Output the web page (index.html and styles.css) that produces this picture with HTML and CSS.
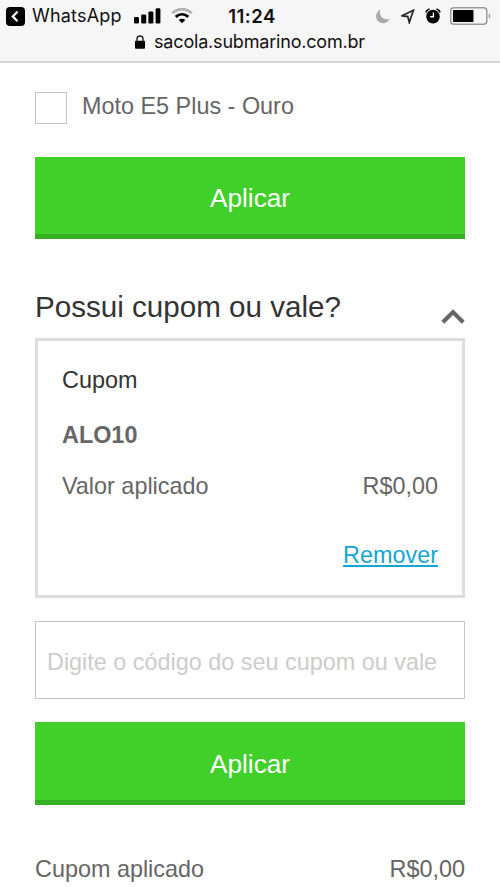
FILE: index.html
```html
<!DOCTYPE html>
<html lang="pt-BR">
<head>
<meta charset="utf-8">
<title>Sacola</title>
<link rel="stylesheet" href="styles.css">
</head>
<body>
<header class="browser">
  <div class="status">
    <div class="status-left">
      <svg class="back" width="19" height="19" viewBox="0 0 19 19"><rect width="19" height="19" rx="4"/><path d="M11.5 4.6 6.7 9.4l4.8 4.8" fill="none" stroke="#fff" stroke-width="2.2"/></svg>
      <span class="app">WhatsApp</span>
      <svg class="signal" width="27" height="16" viewBox="0 0 27 16"><rect x="0" y="9" width="5" height="6.5" rx="1.3"/><rect x="7.2" y="6.5" width="5" height="9" rx="1.3"/><rect x="14.4" y="3.5" width="5" height="12" rx="1.3"/><rect x="21.6" y="0.3" width="4.8" height="15.2" rx="1.3"/></svg>
      <svg class="wifi" width="22" height="16" viewBox="0 0 22 16"><path d="M1.2 5.2C7-.1 15-.1 20.8 5.2" fill="none" stroke="#b5b5b5" stroke-width="3"/><path d="M4.7 8.8C8.5 5.5 13.5 5.5 17.3 8.8" fill="none" stroke="#000" stroke-width="2.9"/><path d="M7.7 12C9.7 10.3 12.3 10.3 14.3 12L11 15.3Z"/></svg>
    </div>
    <span class="time">11:24</span>
    <div class="status-right">
      <svg width="14" height="15" viewBox="0 0 14 15"><path d="M4.4.4C-.5 2.8-1.2 8.7 2 12c3.500 3.700 9.700 2.600 11.700-2.300C7.800 12 2.200 7 4.400.4Z" fill="#aaa"/></svg>
      <svg class="arrow" width="15" height="15" viewBox="0 0 15 15"><path d="M13.400 1.300 1.500 6.900 7.700 7.300 9.300 13.400Z" fill="none" stroke="#222" stroke-width="1.700"/></svg>
      <svg class="alarm" width="16" height="16" viewBox="0 0 16 16"><circle cx="8" cy="8.600" r="6.800"/><path d="M.9 4.400Q1.800 1.800 4.500 1M15.100 4.400Q14.200 1.800 11.500 1" fill="none" stroke="#000" stroke-width="1.700"/><path d="M8.400 4.500V8.800H5.200" fill="none" stroke="#fff" stroke-width="1.400"/></svg>
      <svg class="battery" width="42" height="18" viewBox="0 0 42 18"><rect x=".8" y=".8" width="36" height="16.400" rx="3.200" fill="none" stroke="#999" stroke-width="1.500"/><rect x="3" y="3" width="20.500" height="12" rx=".8"/><path d="M38.800 6Q42 9 38.800 12Z" fill="#999"/></svg>
    </div>
  </div>
  <div class="address">
    <svg width="10" height="14" viewBox="0 0 10 14"><rect y="5.700" width="10" height="8" rx="1"/><path d="M2 6.500V4a3 3 0 0 1 6 0v2.500" fill="none" stroke="#222" stroke-width="1.400"/></svg>
    <span class="url">sacola.submarino.com.br</span>
  </div>
</header>
<main>
  <label class="option"><input type="checkbox" class="check"><span class="name">Moto E5 Plus - Ouro</span></label>
  <button class="apply">Aplicar</button>
  <div class="heading">
    <h2>Possui cupom ou vale?</h2>
    <svg width="24" height="16" viewBox="0 0 24 16"><path d="M1.800 13.300 12 3.100 22.200 13.300" fill="none" stroke="#666" stroke-width="4.200"/></svg>
  </div>
  <section class="card">
    <h3>Cupom</h3>
    <strong>ALO10</strong>
    <div class="row"><span>Valor aplicado</span><span>R$0,00</span></div>
    <a class="remove" href="#">Remover</a>
  </section>
  <input class="code" type="text" placeholder="Digite o código do seu cupom ou vale">
  <button class="apply second">Aplicar</button>
  <div class="row total"><span>Cupom aplicado</span><span>R$0,00</span></div>
</main>
</body>
</html>
```
FILE: styles.css
```css
* { box-sizing: border-box; }
body {
  margin: 0;
  height: 887px;
  overflow: hidden;
  background: #fefefe;
  color: #666;
  font: 23.4px/28px "Liberation Sans", Arial, sans-serif;
}
h2, h3 { margin: 0; color: #333; font-weight: normal; }
svg { display: block; flex: none; }

.browser {
  height: 63px;
  background: #f6f6f6;
  border-bottom: 2px solid #d4d4d4;
  color: #111;
  font-family: Inter, sans-serif;
  font-size: 18px;
}
.status {
  display: grid;
  grid-template-columns: 1fr auto 1fr;
  align-items: center;
  height: 32px;
  padding: 0 8px 0 6px;
}
.status-left, .status-right { display: flex; align-items: center; }
.status-right { justify-content: flex-end; }
.app { width: 91px; margin-left: 7px; letter-spacing: 0.2px; white-space: nowrap; }
.signal { margin-left: 11px; }
.wifi { margin-left: 10px; }
.time { padding-left: 6px; font-size: 18.5px; font-weight: 600; letter-spacing: 0.5px; }
.arrow { margin-left: 10px; }
.alarm { margin-left: 10px; }
.battery { margin-left: 9px; }
.address {
  display: flex;
  justify-content: center;
  align-items: center;
  gap: 9px;
  height: 20px;
  font-size: 18px;
  letter-spacing: -0.19px;
}

main { padding: 29px 35px 0; }
.option { display: flex; align-items: center; height: 32px; }
.check {
  appearance: none;
  width: 32px;
  height: 32px;
  margin: 0 15px 0 0;
  border: 1.5px solid #c4c4c4;
  background: #fff;
}
.name { margin-top: -4px; }
.apply {
  display: block;
  width: 100%;
  height: 82px;
  margin: 33px 0 0;
  padding: 5px 0 0;
  border: 0;
  border-bottom: 5px solid #35b020;
  background: #41cf29;
  color: #fff;
  font: 26.2px/32px "Liberation Sans", Arial, sans-serif;
}
.heading {
  display: flex;
  justify-content: space-between;
  align-items: flex-end;
  height: 99px;
  padding-bottom: 13px;
}
h2 { font-size: 29.6px; line-height: 36px; }
.card {
  display: flex;
  flex-direction: column;
  height: 260px;
  padding: 25px 24px 0;
  border: 3px solid #ddd;
}
h3 { font-size: 23.4px; line-height: 28px; }
.card strong { margin-top: 27px; }
.row { display: flex; justify-content: space-between; }
.card .row { margin-top: 23px; }
.remove {
  align-self: flex-end;
  margin-top: 41px;
  color: #14a5d8;
  text-underline-offset: 2px;
  text-decoration-thickness: 1.5px;
}
.code {
  display: block;
  width: 100%;
  height: 78px;
  margin: 23px 0 0;
  padding: 4px 11px 0;
  border: 1.5px solid #c4c4c4;
  border-radius: 0;
  background: #fff;
  font: inherit;
}
.code::placeholder { color: #ccc; opacity: 1; }
.second { height: 83px; margin-top: 23px; }
.total { margin-top: 50px; }
```
